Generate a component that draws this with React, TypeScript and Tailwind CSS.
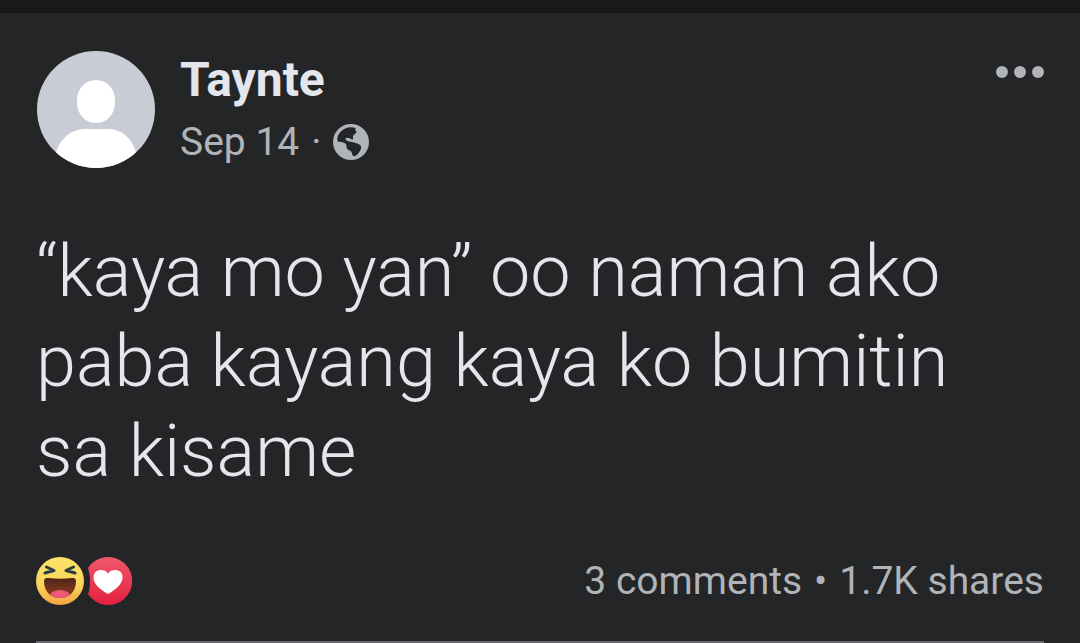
import React from 'react';

const Avatar: React.FC = () => (
  <svg viewBox="-1 0 120 118" className="w-[120px] h-[118px] shrink-0" role="img" aria-label="Profile picture">
    <defs>
      <clipPath id="avatar-circle">
        <ellipse cx="59" cy="58.5" rx="59" ry="58.5" />
      </clipPath>
    </defs>
    <g clipPath="url(#avatar-circle)">
      <rect width="118" height="118" fill="#c9ccd4" />
      <rect x="40" y="29" width="38" height="43" rx="19" ry="20" fill="#fff" />
      <path d="M18 118V107C20 90 33 78 48 78H71C86 78 98 90 100 107V118Z" fill="#fff" />
    </g>
  </svg>
);

const GlobeIcon: React.FC = () => (
  <svg viewBox="0 0 36 36" className="w-9 h-9" role="img" aria-label="Public">
    <circle cx="18" cy="18" r="18" fill="#b0b3b8" />
    <path
      d="M22.500 4C17 2 11 4 7.500 8C4.500 11 3.500 15 5 17.500C6.500 18.500 9 17.500 11.500 19C13.500 20 13.500 21 13.500 23C13.500 25 15.500 26 17.500 27C19.500 28 18.500 31 20.500 32C23 33 26 29 27.500 26C28.500 24 28.500 22 27 21C25 19.500 23 19 21 18.500C18.500 17.500 16 18 14.500 17C13 16 12 15.500 12.500 14.500C14 13 16.500 14 18 15C19.500 16 20.500 15.500 20 13.500C19.500 11.500 21 10.500 22.500 9.500C24 8.500 23.500 7.500 22.500 6.500C22 5.500 22.500 5 22.500 4Z"
      fill="#242526"
    />
  </svg>
);

const HahaIcon: React.FC = () => (
  <svg viewBox="0 0 48 48" className="w-12 h-12" role="img" aria-label="Haha">
    <defs>
      <linearGradient id="haha-face" x1="0" y1="0" x2="0" y2="1">
        <stop offset="0" stopColor="#fbe467" />
        <stop offset="0.6" stopColor="#fad359" />
        <stop offset="1" stopColor="#f5a443" />
      </linearGradient>
      <linearGradient id="haha-mouth" x1="0" y1="0" x2="0" y2="1">
        <stop offset="0" stopColor="#482314" />
        <stop offset="1" stopColor="#9a4124" />
      </linearGradient>
      <clipPath id="haha-mouth-clip">
        <path d="M8 24C8 21.500 10 21 12 21C20 22 28 22 36 21C38 21 40 21.500 40 24C40 35 33 41 24 41C15 41 8 35 8 24Z" />
      </clipPath>
    </defs>
    <circle cx="24" cy="24" r="24" fill="url(#haha-face)" />
    <g clipPath="url(#haha-mouth-clip)">
      <rect x="8" y="20" width="32" height="22" fill="url(#haha-mouth)" />
      <ellipse cx="24" cy="39" rx="10" ry="6" fill="#ee5876" />
    </g>
    <path
      d="M10.500 10L18 13.500L9 16M37.500 10L30 13.500L39 16"
      fill="none"
      stroke="#2b3b47"
      strokeWidth="3"
      strokeLinecap="round"
      strokeLinejoin="round"
    />
  </svg>
);

const LoveIcon: React.FC = () => (
  <svg viewBox="0 0 44 48" className="w-11 h-12" role="img" aria-label="Love">
    <defs>
      <linearGradient id="love-bg" x1="0" y1="0" x2="0" y2="1">
        <stop offset="0" stopColor="#f0586c" />
        <stop offset="1" stopColor="#e3203f" />
      </linearGradient>
    </defs>
    <path d="M0 11A24 24 0 1 1 0 37C1.500 33 2 29 2 24C2 19 1.500 15 0 11Z" fill="url(#love-bg)" />
    <path
      d="M20 37C13 33 5 27 5.500 20C6 15 9 13 13 13C16 13 18.500 14 20 16.500C21.500 14 24 13 27 13C31 13 34.500 15 34.500 20C35 27 27 33 20 37Z"
      fill="#fff"
    />
  </svg>
);

const App: React.FC = () => {
  return (
    <div className="min-h-screen bg-[#242526] border-t-[13px] border-[#18191a] font-[Roboto,sans-serif]">
      <article className="px-9 pt-[38px]">
        {/* Author */}
        <header className="flex items-start">
          <Avatar />
          <div className="ml-6 pt-[3px]">
            <h1 className="text-[48px] leading-[52px] font-bold text-[#e4e6eb]">Taynte</h1>
            <div className="mt-[10px] flex items-center text-[39px] leading-[52px] text-[#b0b3b8]">
              <time>Sep 14</time>
              <span className="mx-3">·</span>
              <GlobeIcon />
            </div>
          </div>
          <button type="button" aria-label="More options" className="ml-auto mt-[15px] flex gap-[6px]">
            <span className="w-3 h-3 rounded-full bg-[#b0b3b8]" />
            <span className="w-3 h-3 rounded-full bg-[#b0b3b8]" />
            <span className="w-3 h-3 rounded-full bg-[#b0b3b8]" />
          </button>
        </header>

        <p className="mt-[58px] pr-4 text-[72px] leading-[90px] font-light text-[#e4e6eb]">
          “kaya mo yan” oo naman ako paba kayang kaya ko bumitin sa kisame
        </p>

        {/* Reactions and counts */}
        <footer className="mt-[60px] pb-9 flex items-center justify-between border-b-2 border-[#65676b]">
          <div className="flex gap-1">
            <HahaIcon />
            <LoveIcon />
          </div>
          <div className="flex gap-3 text-[39px] leading-[48px] text-[#b0b3b8]">
            <span>3 comments</span>
            <span>•</span>
            <span>1.7K shares</span>
          </div>
        </footer>
      </article>
    </div>
  );
};

export default App;
